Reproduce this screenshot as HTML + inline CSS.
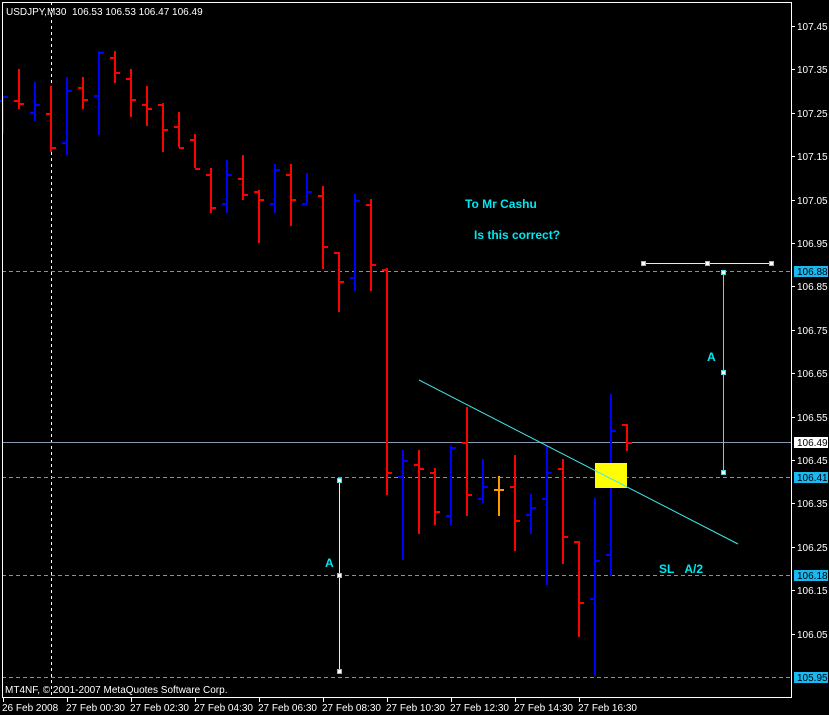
<!DOCTYPE html>
<html><head><meta charset="utf-8"><style>
html,body{margin:0;padding:0;background:#000;width:829px;height:715px;overflow:hidden}
svg{display:block}
text{font-family:"Liberation Sans",sans-serif;font-size:10px;fill:#fff}
.c{fill:#00e8f0;font-weight:bold;font-size:12px}
</style></head><body>
<svg id="s" width="829" height="715" xmlns="http://www.w3.org/2000/svg" shape-rendering="crispEdges">
<rect width="829" height="715" fill="#000"/>
<line x1="51.5" y1="2" x2="51.5" y2="697" stroke="#fff" stroke-dasharray="3,3"/>
<g stroke="#1ab8f0" stroke-dasharray="4,3">
<line x1="2" y1="271.5" x2="791" y2="271.5"/>
<line x1="2" y1="477.5" x2="791" y2="477.5"/>
<line x1="2" y1="575.5" x2="791" y2="575.5"/>
<line x1="2" y1="677.5" x2="791" y2="677.5"/>
</g>
<line x1="2" y1="442.5" x2="791" y2="442.5" stroke="#8898b0"/>
<g id="bars"></g>
<rect x="595" y="463" width="32" height="25" fill="#ffff00"/>
<line x1="419" y1="380" x2="738" y2="544" stroke="#40e8e8" shape-rendering="auto"/>
<g stroke="#e0f0f0">
<line x1="643" y1="263.5" x2="771" y2="263.5"/>
<line x1="723.5" y1="272" x2="723.5" y2="472" stroke="#40e0f0"/>
<line x1="339.5" y1="480" x2="339.5" y2="671"/>
</g>
<g fill="#fff" stroke="#40e0f0">
<rect x="641.5" y="261.5" width="4" height="4"/><rect x="705.5" y="261.5" width="4" height="4"/><rect x="769.5" y="261.5" width="4" height="4"/>
<rect x="721.5" y="270.5" width="4" height="4"/><rect x="721.5" y="370.5" width="4" height="4"/><rect x="721.5" y="470.5" width="4" height="4"/>
<rect x="337.5" y="478.5" width="4" height="4"/><rect x="337.5" y="573.5" width="4" height="4"/><rect x="337.5" y="669.5" width="4" height="4"/>
</g>
<text class="c" x="707" y="361">A</text>
<text class="c" x="325" y="567">A</text>
<text class="c" x="659" y="573">SL&#160;&#160;&#160;A/2</text>
<text class="c" x="465" y="208">To Mr Cashu</text>
<text class="c" x="474" y="239">Is this correct?</text>
<g fill="none" stroke="#fff">
<polyline points="2.5,697 2.5,2.5 791.5,2.5 791.5,697"/>
<line x1="2" y1="697.5" x2="792" y2="697.5"/>
</g>
<g id="ax"></g>
<text x="6" y="15">USDJPY,M30&#160;&#160;106.53 106.53 106.47 106.49</text>
<text x="5" y="693">MT4NF, © 2001-2007 MetaQuotes Software Corp.</text>
</svg>
<script>
var B=[[96,134,100,96,'b'],[69,109,100,103,'r'],[82,121,112,104,'b'],[86,152,113,147,'r'],[77,155,142,90,'b'],[77,109,87,99,'r'],[51,135,95,52,'b'],[51,83,57,72,'r'],[69,117,78,99,'r'],[86,126,104,108,'r'],[103,152,104,129,'r'],[112,147,126,147,'r'],[134,168,139,168,'r'],[168,213,174,207,'r'],[160,213,203,174,'b'],[155,200,178,194,'r'],[190,243,191,199,'r'],[164,213,203,169,'b'],[164,226,174,199,'r'],[173,203,203,191,'b'],[186,269,195,246,'r'],[252,312,252,281,'r'],[194,291,277,200,'b'],[199,291,204,264,'r'],[268,495,269,472,'r'],[450,560,476,460,'b'],[450,534,464,468,'r'],[468,525,472,511,'r'],[446,525,515,447,'b'],[407,516,442,494,'r'],[459,503,498,486,'b'],[476,516,489,489,'o'],[455,551,486,520,'r'],[494,534,514,507,'b'],[446,585,498,472,'b'],[459,564,468,536,'r'],[541,637,541,602,'r'],[498,676,598,560,'b'],[394,576,554,430,'b'],[424,451,424,442,'r']];
var col={r:'#ff0000',b:'#0000ff',o:'#ff9900'};var h='';
B.forEach(function(b,i){var x=3+16*i,c=col[b[4]];
h+='<rect x="'+(x-1)+'" y="'+b[0]+'" width="2" height="'+(b[1]-b[0])+'" fill="'+c+'"/>';
h+='<rect x="'+(x-5)+'" y="'+b[2]+'" width="5" height="2" fill="'+c+'"/>';
h+='<rect x="'+x+'" y="'+b[3]+'" width="5" height="2" fill="'+c+'"/>';});
document.getElementById('bars').innerHTML=h;
var a='';
var P=['107.45','107.35','107.25','107.15','107.05','106.95','106.85','106.75','106.65','106.55','106.45','106.35','106.25','106.15','106.05'];
P.forEach(function(p,i){var y=26+i*43.4;a+='<rect x="792" y="'+Math.round(y)+'" width="3" height="1" fill="#fff"/><text x="797" y="'+Math.round(y+4)+'">'+p+'</text>';});
[['106.88',271,'#1ab8f0','#000'],['106.49',442,'#fff','#000'],['106.41',477,'#1ab8f0','#000'],['106.18',575,'#1ab8f0','#000'],['105.95',677,'#1ab8f0','#000']].forEach(function(l){a+='<rect x="794" y="'+(l[1]-5)+'" width="34" height="11" fill="'+l[2]+'"/><text x="797" y="'+(l[1]+4)+'" style="fill:'+l[3]+'">'+l[0]+'</text>';});
var T=['26 Feb 2008','27 Feb 00:30','27 Feb 02:30','27 Feb 04:30','27 Feb 06:30','27 Feb 08:30','27 Feb 10:30','27 Feb 12:30','27 Feb 14:30','27 Feb 16:30'];
T.forEach(function(t,i){var x=3+64*i;a+='<rect x="'+x+'" y="698" width="1" height="4" fill="#fff"/><text x="'+(x-1)+'" y="711">'+t+'</text>';});
document.getElementById('ax').innerHTML=a;
</script>
</body></html>
